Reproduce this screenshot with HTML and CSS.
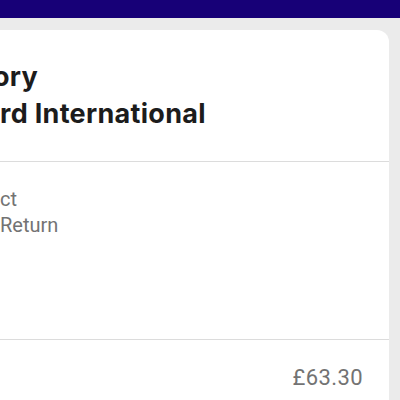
FILE: index.html
```html
<!DOCTYPE html>
<html lang="en">

<head>
    <meta charset="UTF-8">
    <meta name="viewport" content="width=device-width, initial-scale=1.0">
    <title>Delivery</title>
    <link rel="stylesheet" href="styles.css">
</head>

<body>
<header class="topbar"></header>

<main class="page">
    <section class="card">
        <div class="card-section card-head">
            <h2 class="title">
                <span class="title-line first">ory</span>
                <span class="title-line">rd International</span>
            </h2>
        </div>
        <div class="card-section card-info">
            <p class="detail">ct</p>
            <p class="detail">Return</p>
        </div>
        <div class="card-section card-total">
            <span class="price">£63.30</span>
        </div>
    </section>
</main>
</body>
</html>
```

FILE: styles.css
```css
body {
    margin: 0;
    padding: 0;
    background-color: #ebebeb;
    font-family: 'Roboto', 'Liberation Sans', sans-serif;
    overflow: hidden;
}

.topbar {
    height: 18px;
    background-color: #170077;
}

.page {
    padding: 12px 11px 0 0;
}

.card {
    background-color: #fff;
    border-radius: 0 12px 0 0;
    height: 400px;
}

.card-section {
    border-bottom: 1px solid #dcdcdc;
}

.card-head {
    height: 131px;
}

.title {
    margin: 0;
    padding-top: 28px;
    font-family: 'Inter', 'Liberation Sans', sans-serif;
    font-size: 27px;
    font-weight: 700;
    line-height: 37px;
    color: #1c1c1c;
    letter-spacing: 0.3px;
}

.title-line {
    display: block;
    white-space: nowrap;
}

.title-line.first {
    margin-left: -7px;
}

.card-info {
    height: 178px;
    padding-top: 24px;
    box-sizing: border-box;
}

.detail {
    margin: 0;
    font-size: 20px;
    line-height: 26px;
    color: #737373;
}

.card-total {
    display: flex;
    justify-content: flex-end;
    padding: 25px 26px 0 0;
    border-bottom: none;
}

.price {
    font-size: 22px;
    letter-spacing: 0.4px;
    color: #737373;
}
```
